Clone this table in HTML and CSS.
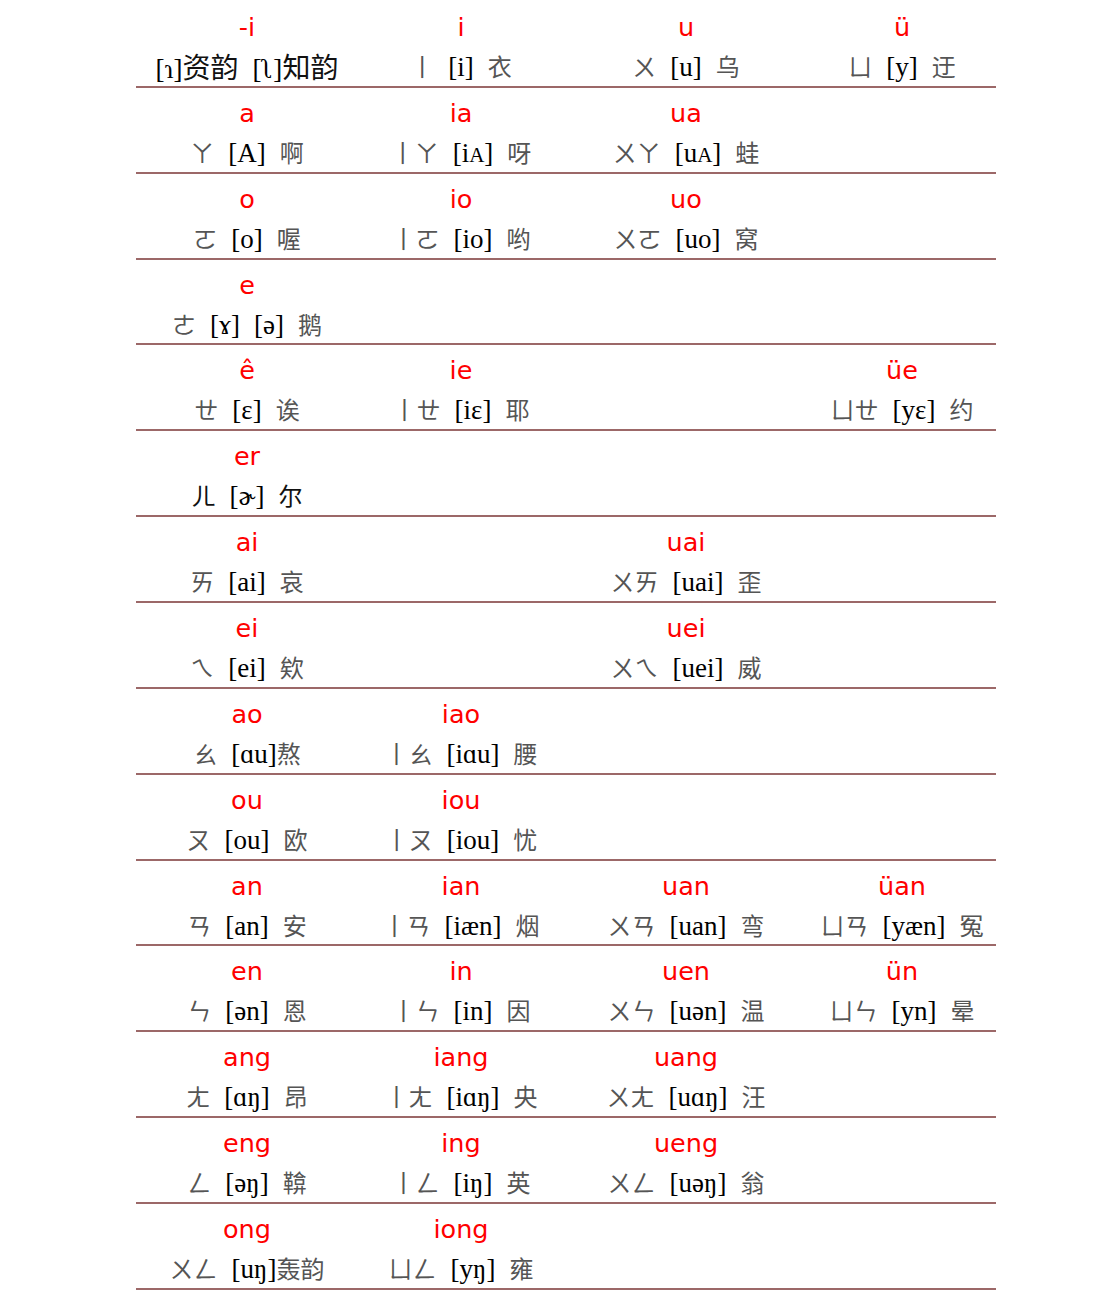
FILE: index.html
```html
<!DOCTYPE html>
<html lang="zh">
<head>
<meta charset="utf-8">
<title>韵母表</title>
<link rel="stylesheet" href="styles.css">
</head>
<body>
<div class="chart">
  <div class="row">
    <div class="cell"><div class="py">-i</div><div class="pr"><span class="grp"><span class="ipa">[ɿ]</span><span class="hz dk big">资韵</span></span><span class="grp"><span class="ipa">[ʅ]</span><span class="hz dk big">知韵</span></span></div></div>
    <div class="cell"><div class="py">i</div><div class="pr"><span class="zy">丨</span><span class="ipa">[i]</span><span class="hz">衣</span></div></div>
    <div class="cell"><div class="py">u</div><div class="pr"><span class="zy">ㄨ</span><span class="ipa">[u]</span><span class="hz">乌</span></div></div>
    <div class="cell"><div class="py">ü</div><div class="pr"><span class="zy">ㄩ</span><span class="ipa">[y]</span><span class="hz">迂</span></div></div>
  </div>
  <div class="row">
    <div class="cell"><div class="py">a</div><div class="pr"><span class="zy">ㄚ</span><span class="ipa">[A]</span><span class="hz">啊</span></div></div>
    <div class="cell"><div class="py">ia</div><div class="pr"><span class="zy">丨ㄚ</span><span class="ipa">[i<span class="sc">A</span>]</span><span class="hz">呀</span></div></div>
    <div class="cell"><div class="py">ua</div><div class="pr"><span class="zy">ㄨㄚ</span><span class="ipa">[u<span class="sc">A</span>]</span><span class="hz">蛙</span></div></div>
    <div class="cell"></div>
  </div>
  <div class="row">
    <div class="cell"><div class="py">o</div><div class="pr"><span class="zy">ㄛ</span><span class="ipa">[o]</span><span class="hz">喔</span></div></div>
    <div class="cell"><div class="py">io</div><div class="pr"><span class="zy">丨ㄛ</span><span class="ipa">[io]</span><span class="hz">哟</span></div></div>
    <div class="cell"><div class="py">uo</div><div class="pr"><span class="zy">ㄨㄛ</span><span class="ipa">[uo]</span><span class="hz">窝</span></div></div>
    <div class="cell"></div>
  </div>
  <div class="row">
    <div class="cell"><div class="py">e</div><div class="pr"><span class="zy">ㄜ</span><span class="ipa">[ɤ]</span><span class="ipa">[ə]</span><span class="hz">鹅</span></div></div>
    <div class="cell"></div>
    <div class="cell"></div>
    <div class="cell"></div>
  </div>
  <div class="row">
    <div class="cell"><div class="py">ê</div><div class="pr"><span class="zy">ㄝ</span><span class="ipa">[ɛ]</span><span class="hz">诶</span></div></div>
    <div class="cell"><div class="py">ie</div><div class="pr"><span class="zy">丨ㄝ</span><span class="ipa">[iɛ]</span><span class="hz">耶</span></div></div>
    <div class="cell"></div>
    <div class="cell"><div class="py">üe</div><div class="pr"><span class="zy">ㄩㄝ</span><span class="ipa">[yɛ]</span><span class="hz">约</span></div></div>
  </div>
  <div class="row">
    <div class="cell"><div class="py">er</div><div class="pr"><span class="zy dk">ㄦ</span><span class="ipa">[ɚ]</span><span class="hz dk">尔</span></div></div>
    <div class="cell"></div>
    <div class="cell"></div>
    <div class="cell"></div>
  </div>
  <div class="row">
    <div class="cell"><div class="py">ai</div><div class="pr"><span class="zy">ㄞ</span><span class="ipa">[ai]</span><span class="hz">哀</span></div></div>
    <div class="cell"></div>
    <div class="cell"><div class="py">uai</div><div class="pr"><span class="zy">ㄨㄞ</span><span class="ipa">[uai]</span><span class="hz">歪</span></div></div>
    <div class="cell"></div>
  </div>
  <div class="row">
    <div class="cell"><div class="py">ei</div><div class="pr"><span class="zy">ㄟ</span><span class="ipa">[ei]</span><span class="hz">欸</span></div></div>
    <div class="cell"></div>
    <div class="cell"><div class="py">uei</div><div class="pr"><span class="zy">ㄨㄟ</span><span class="ipa">[uei]</span><span class="hz">威</span></div></div>
    <div class="cell"></div>
  </div>
  <div class="row">
    <div class="cell"><div class="py">ao</div><div class="pr"><span class="zy">ㄠ</span><span class="grp"><span class="ipa">[ɑu]</span><span class="hz">熬</span></span></div></div>
    <div class="cell"><div class="py">iao</div><div class="pr"><span class="zy">丨ㄠ</span><span class="ipa">[iɑu]</span><span class="hz">腰</span></div></div>
    <div class="cell"></div>
    <div class="cell"></div>
  </div>
  <div class="row">
    <div class="cell"><div class="py">ou</div><div class="pr"><span class="zy">ㄡ</span><span class="ipa">[ou]</span><span class="hz">欧</span></div></div>
    <div class="cell"><div class="py">iou</div><div class="pr"><span class="zy">丨ㄡ</span><span class="ipa">[iou]</span><span class="hz">忧</span></div></div>
    <div class="cell"></div>
    <div class="cell"></div>
  </div>
  <div class="row">
    <div class="cell"><div class="py">an</div><div class="pr"><span class="zy">ㄢ</span><span class="ipa">[an]</span><span class="hz">安</span></div></div>
    <div class="cell"><div class="py">ian</div><div class="pr"><span class="zy">丨ㄢ</span><span class="ipa">[iæn]</span><span class="hz">烟</span></div></div>
    <div class="cell"><div class="py">uan</div><div class="pr"><span class="zy">ㄨㄢ</span><span class="ipa">[uan]</span><span class="hz">弯</span></div></div>
    <div class="cell"><div class="py">üan</div><div class="pr"><span class="zy">ㄩㄢ</span><span class="ipa">[yæn]</span><span class="hz">冤</span></div></div>
  </div>
  <div class="row">
    <div class="cell"><div class="py">en</div><div class="pr"><span class="zy">ㄣ</span><span class="ipa">[ən]</span><span class="hz">恩</span></div></div>
    <div class="cell"><div class="py">in</div><div class="pr"><span class="zy">丨ㄣ</span><span class="ipa">[in]</span><span class="hz">因</span></div></div>
    <div class="cell"><div class="py">uen</div><div class="pr"><span class="zy">ㄨㄣ</span><span class="ipa">[uən]</span><span class="hz">温</span></div></div>
    <div class="cell"><div class="py">ün</div><div class="pr"><span class="zy">ㄩㄣ</span><span class="ipa">[yn]</span><span class="hz">晕</span></div></div>
  </div>
  <div class="row">
    <div class="cell"><div class="py">ang</div><div class="pr"><span class="zy">ㄤ</span><span class="ipa">[ɑŋ]</span><span class="hz">昂</span></div></div>
    <div class="cell"><div class="py">iang</div><div class="pr"><span class="zy">丨ㄤ</span><span class="ipa">[iɑŋ]</span><span class="hz">央</span></div></div>
    <div class="cell"><div class="py">uang</div><div class="pr"><span class="zy">ㄨㄤ</span><span class="ipa">[uɑŋ]</span><span class="hz">汪</span></div></div>
    <div class="cell"></div>
  </div>
  <div class="row">
    <div class="cell"><div class="py">eng</div><div class="pr"><span class="zy">ㄥ</span><span class="ipa">[əŋ]</span><span class="hz">鞥</span></div></div>
    <div class="cell"><div class="py">ing</div><div class="pr"><span class="zy">丨ㄥ</span><span class="ipa">[iŋ]</span><span class="hz">英</span></div></div>
    <div class="cell"><div class="py">ueng</div><div class="pr"><span class="zy">ㄨㄥ</span><span class="ipa">[uəŋ]</span><span class="hz">翁</span></div></div>
    <div class="cell"></div>
  </div>
  <div class="row">
    <div class="cell"><div class="py">ong</div><div class="pr"><span class="zy">ㄨㄥ</span><span class="grp"><span class="ipa">[uŋ]</span><span class="hz">轰韵</span></span></div></div>
    <div class="cell"><div class="py">iong</div><div class="pr"><span class="zy">ㄩㄥ</span><span class="ipa">[yŋ]</span><span class="hz">雍</span></div></div>
    <div class="cell"></div>
    <div class="cell"></div>
  </div>
</div>
</body>
</html>
```

FILE: styles.css
```css
html, body {
  margin: 0;
  padding: 0;
  background: #ffffff;
}

body {
  padding-top: 2px;
}

.chart {
  width: 860px;
  margin-left: 136px;
}

.row {
  display: grid;
  grid-template-columns: 222px 206px 244px 188px;
  height: 85.86px;
  box-sizing: border-box;
  border-bottom: 2px solid #9c6868;
}

.cell {
  display: flex;
  flex-direction: column;
  align-items: center;
}

.py {
  margin-top: 10px;
  height: 30px;
  line-height: 30px;
  font-family: "DejaVu Sans", "Noto Sans", sans-serif;
  font-size: 25.5px;
  color: #ff0000;
}

.pr {
  margin-top: 4px;
  height: 40px;
  display: flex;
  align-items: baseline;
  gap: 14px;
  line-height: 40px;
  white-space: nowrap;
}

.grp {
  display: inline-flex;
  align-items: baseline;
}

.zy, .hz {
  font-family: "Noto Sans CJK SC", "Noto Sans CJK TC", sans-serif;
  font-size: 24px;
  color: #555555;
}

.dk {
  color: #111111;
}

.big {
  font-size: 28px;
}

.ipa {
  font-family: "Liberation Serif", "DejaVu Serif", serif;
  font-size: 27px;
  color: #000000;
}

.sc {
  font-size: 21px;
}
```
